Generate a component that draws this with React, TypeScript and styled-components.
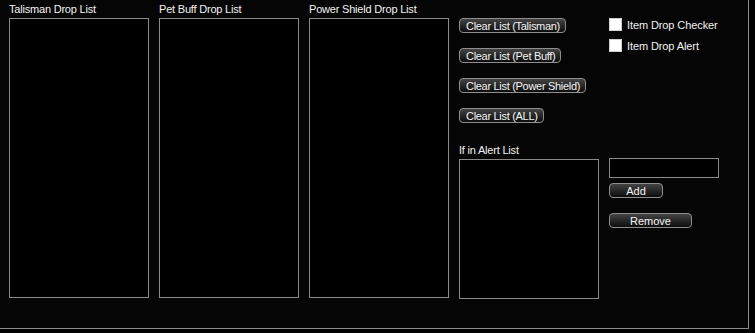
import React, { useState } from 'react';
import styled, { createGlobalStyle } from 'styled-components';

const GlobalStyle = createGlobalStyle`
  html, body {
    margin: 0;
    padding: 0;
    background: #000;
  }
  body {
    font-family: 'Liberation Sans', Arial, sans-serif;
    font-size: 11px;
    color: #f2f2f2;
  }
`;

const Frame = styled.div`
  box-sizing: border-box;
  width: 749px;
  height: 329px;
  border-right: 1px solid #8c8c88;
  border-bottom: 1px solid #8c8c88;
  background: #050505;
  padding: 3px 0 0 9px;
  display: flex;
  gap: 10px;
`;

const Column = styled.div`
  width: 140px;
  display: flex;
  flex-direction: column;
`;

const Label = styled.div`
  height: 15px;
  line-height: 13px;
  white-space: nowrap;
  letter-spacing: -0.2px;
`;

const ListBox = styled.div<{ $h: number }>`
  box-sizing: border-box;
  width: 140px;
  height: ${(p) => p.$h}px;
  border: 1px solid #8a8a86;
  background: #000;
`;

const ButtonStack = styled.div`
  display: flex;
  flex-direction: column;
  align-items: flex-start;
  gap: 15px;
  height: 126px;
`;

const Btn = styled.button<{ $w?: number }>`
  box-sizing: border-box;
  width: ${(p) => (p.$w ? `${p.$w}px` : 'auto')};
  height: 15px;
  padding: 0 5px 0 6px;
  border: 1px solid #8e8e8e;
  border-radius: 4px;
  background: linear-gradient(#444 0%, #2a2a2a 45%, #0c0c0c 100%);
  color: #f4f4f4;
  font-family: inherit;
  font-size: 11px;
  letter-spacing: -0.3px;
  line-height: 12px;
  text-align: left;
  white-space: nowrap;
  cursor: pointer;
`;

const CenterBtn = styled(Btn)`
  padding: 0;
  text-align: center;
  letter-spacing: 0;
`;

const Checks = styled.div`
  display: flex;
  flex-direction: column;
  gap: 8px;
  height: 140px;
`;

const CheckRow = styled.label`
  display: flex;
  align-items: center;
  gap: 5px;
  height: 13px;
  white-space: nowrap;
  letter-spacing: -0.1px;
  cursor: pointer;
`;

const Box = styled.span`
  box-sizing: border-box;
  width: 13px;
  height: 13px;
  background: #fff;
  border: 1px solid #cfcfcf;
  display: flex;
  align-items: center;
  justify-content: center;
  color: #000;
  font-size: 10px;
`;

const TextInput = styled.input`
  box-sizing: border-box;
  width: 110px;
  height: 20px;
  border: 1px solid #8a8a86;
  background: #000;
  color: #fff;
  margin-bottom: 5px;
  outline: none;
`;

const SideStack = styled.div`
  display: flex;
  flex-direction: column;
  align-items: flex-start;
`;

const Gap = styled.div<{ $h: number }>`
  height: ${(p) => p.$h}px;
`;

const lists = ['Talisman Drop List', 'Pet Buff Drop List', 'Power Shield Drop List'];

const clearButtons = [
  'Clear List (Talisman)',
  'Clear List (Pet Buff)',
  'Clear List (Power Shield)',
  'Clear List (ALL)',
];

export default function App() {
  const [checker, setChecker] = useState(false);
  const [alert, setAlert] = useState(false);

  return (
    <>
      <GlobalStyle />
      <Frame>
        {lists.map((l) => (
          <Column key={l}>
            <Label>{l}</Label>
            <ListBox $h={280} />
          </Column>
        ))}
        <Column>
          <Gap $h={15} />
          <ButtonStack>
            {clearButtons.map((b) => (
              <Btn key={b}>{b}</Btn>
            ))}
          </ButtonStack>
          <Label>If in Alert List</Label>
          <ListBox $h={140} />
        </Column>
        <Column>
          <Gap $h={15} />
          <Checks>
            <CheckRow onClick={() => setChecker(!checker)}>
              <Box>{checker ? '✓' : ''}</Box>
              Item Drop Checker
            </CheckRow>
            <CheckRow onClick={() => setAlert(!alert)}>
              <Box>{alert ? '✓' : ''}</Box>
              Item Drop Alert
            </CheckRow>
          </Checks>
          <SideStack>
            <TextInput type="text" />
            <CenterBtn $w={54}>Add</CenterBtn>
            <Gap $h={15} />
            <CenterBtn $w={83}>Remove</CenterBtn>
          </SideStack>
        </Column>
      </Frame>
    </>
  );
}
